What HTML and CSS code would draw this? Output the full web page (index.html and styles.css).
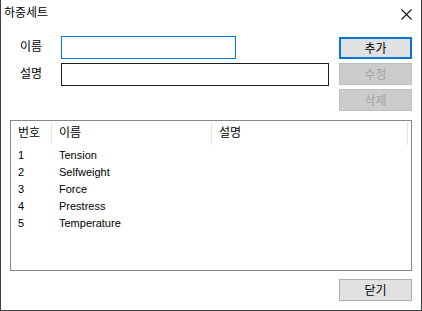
FILE: index.html
```html
<!DOCTYPE html>
<html lang="ko">
<head>
<meta charset="utf-8">
<link rel="stylesheet" href="styles.css">
</head>
<body>
<div class="window">
  <div class="titlebar">
    <span class="title">하중세트</span>
    <span class="close">
      <svg width="11" height="11" viewBox="0 0 11 11"><path d="M0.5 0.5 L10.5 10.5 M10.5 0.5 L0.5 10.5" stroke="#111" stroke-width="1.1" fill="none"/></svg>
    </span>
  </div>
  <div class="form">
    <div class="fields">
      <label class="label">이름</label>
      <div class="input input-focus short"></div>
      <label class="label">설명</label>
      <div class="input long"></div>
    </div>
    <div class="buttons">
      <div class="btn btn-default">추가</div>
      <div class="btn btn-disabled">수정</div>
      <div class="btn btn-disabled">삭제</div>
    </div>
  </div>
  <div class="list">
    <div class="list-head">
      <div class="hcell c1">번호</div>
      <div class="hcell c2">이름</div>
      <div class="hcell c3">설명</div>
    </div>
    <div class="row"><span class="c1">1</span><span class="c2">Tension</span><span class="c3"></span></div>
    <div class="row"><span class="c1">2</span><span class="c2">Selfweight</span><span class="c3"></span></div>
    <div class="row"><span class="c1">3</span><span class="c2">Force</span><span class="c3"></span></div>
    <div class="row"><span class="c1">4</span><span class="c2">Prestress</span><span class="c3"></span></div>
    <div class="row"><span class="c1">5</span><span class="c2">Temperature</span><span class="c3"></span></div>
  </div>
  <div class="footer">
    <div class="btn">닫기</div>
  </div>
</div>
</body>
</html>
```

FILE: styles.css
```css
html, body {
  margin: 0;
  padding: 0;
  background: #ffffff;
}
.window {
  box-sizing: border-box;
  width: 422px;
  height: 311px;
  background: #ffffff;
  border-left: 1px solid #3c4148;
  border-right: 1px solid #3c4148;
  border-bottom: 1px solid #3c4148;
  font-family: "Noto Sans CJK KR", "Liberation Sans", sans-serif;
  font-size: 12px;
  color: #000;
  display: flex;
  flex-direction: column;
}
.titlebar {
  height: 36px;
  display: flex;
  align-items: flex-start;
  justify-content: space-between;
}
.title {
  margin-left: 3px;
  line-height: 23px;
  font-size: 12px;
}
.close {
  margin-top: 9px;
  margin-right: 9px;
  width: 11px;
  height: 11px;
  display: flex;
}
.form {
  height: 76px;
  display: flex;
  padding: 0 9px 0 19px;
}
.fields {
  display: grid;
  grid-template-columns: 41px auto;
  grid-auto-rows: 23px;
  row-gap: 4px;
  align-items: center;
}
.label {
  line-height: 14px;
  margin-top: -4px;
}
.input {
  box-sizing: border-box;
  height: 23px;
  border: 1px solid #1f1f1f;
  background: #fff;
}
.input-focus {
  border-color: #0078d7;
}
.short { width: 175px; }
.long { width: 268px; }
.buttons {
  margin-left: auto;
  margin-top: 1px;
  display: flex;
  flex-direction: column;
  gap: 4px;
}
.btn {
  box-sizing: border-box;
  width: 73px;
  height: 22px;
  border: 1px solid #adadad;
  background: #e1e1e1;
  display: flex;
  align-items: center;
  justify-content: center;
  font-size: 12px;
  line-height: 14px;
  padding-bottom: 1px;
}
.btn-default {
  border: 2px solid #0078d7;
}
.btn-disabled {
  background: #cccccc;
  border-color: #bfbfbf;
  color: #a3a3a3;
}
.list {
  box-sizing: border-box;
  margin: 8px 9px 0 9px;
  height: 151px;
  border: 1px solid #828790;
  font-family: "Liberation Sans", "Noto Sans CJK KR", sans-serif;
  font-size: 11px;
}
.list-head {
  display: flex;
  height: 25px;
  padding-top: 1px;
  box-sizing: border-box;
}
.hcell {
  box-sizing: border-box;
  border-right: 1px solid #e5e5e5;
  padding-left: 7px;
  line-height: 20px;
  font-family: "Noto Sans CJK KR", sans-serif;
  font-size: 12px;
  height: 23px;
}
.c1 { width: 41px; flex: none; box-sizing: border-box; padding-left: 7px; }
.c2 { width: 160px; flex: none; box-sizing: border-box; padding-left: 7px; }
.c3 { width: 196px; flex: none; box-sizing: border-box; padding-left: 7px; }
.list-head .c1 { width: 41px; }
.row {
  display: flex;
  height: 17px;
  line-height: 17px;
}
.row:first-of-type { margin-top: 0; }
.list-head + .row { margin-top: 1px; }
.footer {
  display: flex;
  justify-content: flex-end;
  padding: 8px 9px 0 0;
}
```
